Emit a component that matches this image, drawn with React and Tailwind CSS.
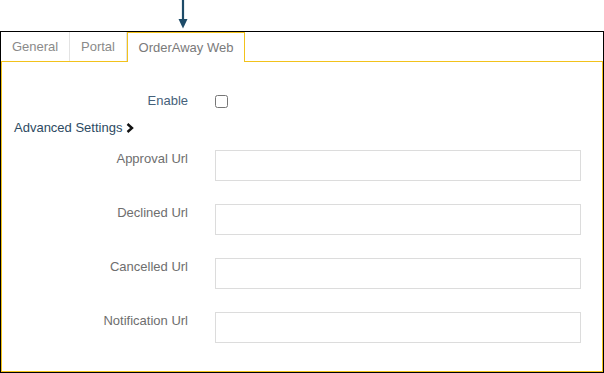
import { useState } from "react";

const fields = ["Approval Url", "Declined Url", "Cancelled Url", "Notification Url"];
const tabs = [
  { label: "General", w: "w-[69px]" },
  { label: "Portal", w: "w-[57px]" },
  { label: "OrderAway Web", w: "w-[118px]" },
];

function DownArrow() {
  return (
    <svg width="10" height="29" viewBox="0 0 10 29" className="block">
      <line x1="5" y1="0" x2="5" y2="21" stroke="#1d4b68" strokeWidth="2.2" />
      <path d="M0.5 19 L9.5 19 L5 28.5 Z" fill="#1d4b68" />
    </svg>
  );
}

function Chevron() {
  return (
    <svg width="8" height="10" viewBox="0 0 8 10" className="block">
      <path d="M1.5 1 L6 5 L1.5 9" fill="none" stroke="#111" strokeWidth="2.4" />
    </svg>
  );
}

export default function App() {
  const [active, setActive] = useState(2);
  const [enabled, setEnabled] = useState(false);

  return (
    <div className="w-[604px] h-[373px] bg-white text-[13px] font-['Liberation_Sans',Arial,sans-serif]">
      {/* annotation arrow */}
      <div className="h-[31px] pl-[178px]">
        <DownArrow />
      </div>

      <div className="h-[342px] border border-black flex flex-col">
        {/* tab strip */}
        <div className="flex h-[30px] relative z-10">
          {tabs.map((t, i) =>
            i === active ? (
              <button
                key={t.label}
                onClick={() => setActive(i)}
                className={`${t.w} h-[30px] bg-white border-t border-l border-r border-[#f2c21b] text-[#7a7a7a] leading-none whitespace-nowrap`}
              >
                {t.label}
              </button>
            ) : (
              <button
                key={t.label}
                onClick={() => setActive(i)}
                className={`${t.w} h-[29px] bg-white border-r border-[#e3e3e3] text-[#8a8a8a] leading-none whitespace-nowrap`}
              >
                {t.label}
              </button>
            )
          )}
        </div>

        {/* panel */}
        <div className="flex-1 -mt-px border border-[#f2c21b]">
          <div className="pt-[29px]">
            <div className="flex items-center h-5">
              <div className="w-[186px] text-right text-[#45617a]">Enable</div>
              <div className="ml-[27px] flex items-center">
                <input
                  type="checkbox"
                  checked={enabled}
                  onChange={(e) => setEnabled(e.target.checked)}
                  className="m-0 w-[13px] h-[13px]"
                />
              </div>
            </div>

            <div className="mt-[7px] flex items-center h-5 pl-[12px] gap-[4px]">
              <span className="text-[#2d4a62]">Advanced Settings</span>
              <Chevron />
            </div>

            <div className="mt-[12px] flex flex-col gap-[23px]">
              {fields.map((f) => (
                <div key={f} className="flex items-start">
                  <label className="w-[186px] text-right text-[#6e6e6e] leading-4 pt-[1px]">{f}</label>
                  <input
                    type="text"
                    className="ml-[27px] w-[366px] h-[31px] border border-[#dcdcdc] bg-white outline-none px-2"
                  />
                </div>
              ))}
            </div>
          </div>
        </div>
      </div>
    </div>
  );
}
